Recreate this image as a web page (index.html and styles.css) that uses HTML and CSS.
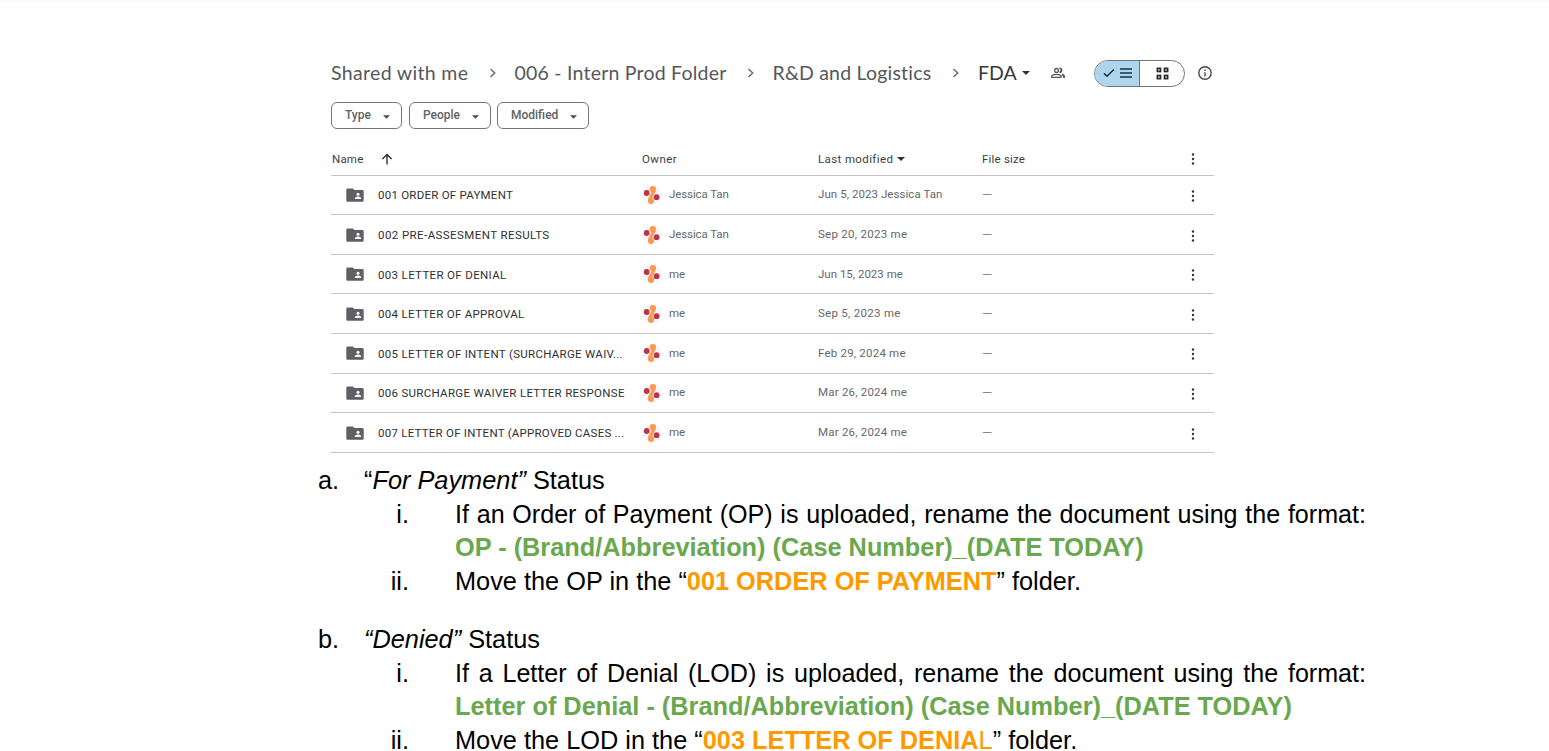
FILE: index.html
```html
<!DOCTYPE html>
<html lang="en">
<head>
<meta charset="utf-8">
<title>FDA folder guide</title>
<link rel="stylesheet" href="styles.css">
</head>
<body>
<svg class="defs" aria-hidden="true">
  <symbol id="folder" viewBox="0 0 18 14"><path d="M1.500.4h5.300l1.600 1.600h8q1.300 0 1.300 1.300v9.100q0 1.300-1.300 1.300h-15Q.3 13.700.3 12.400V1.700Q.3.400 1.500.400Z" fill="#5f6065"/><circle cx="12" cy="6.200" r="1.500" fill="#fff"/><path d="M8.900 11.100v-.7c0-1.300 1.900-1.900 3.100-1.900s3.100.6 3.100 1.900v.7z" fill="#fff"/></symbol>
  <symbol id="avatar" viewBox="0 0 20 20"><circle cx="10" cy="10" r="9.500" fill="#f5f4f8"/><circle cx="4.700" cy="8" r="2.900" fill="#bd3346"/><circle cx="14.600" cy="12.200" r="2.900" fill="#bd3346"/><circle cx="10.900" cy="4.200" r="3.100" fill="#f79b52"/><circle cx="9" cy="15.800" r="3.100" fill="#f79b52"/><path d="M12.300 5.500 7.500 14.500" stroke="#f79b52" stroke-width="3.200"/></symbol>
  <symbol id="dots" viewBox="0 0 4 14"><circle cx="2" cy="2.500" r="1.200"/><circle cx="2" cy="7" r="1.200"/><circle cx="2" cy="11.500" r="1.200"/></symbol>
  <symbol id="chev" viewBox="0 0 8 12"><path d="M1.500 2 5.700 6 1.500 10" fill="none" stroke="#6b6d70" stroke-width="1.500"/></symbol>
  <symbol id="caret" viewBox="0 0 8 4"><path d="M0 0h8L4 4z"/></symbol>
</svg>
<main class="page">
  <section class="drive">
    <nav class="crumbs">
      <span class="crumb c1">Shared with me</span><svg class="chev"><use href="#chev"/></svg>
      <span class="crumb c2">006 - Intern Prod Folder</span><svg class="chev"><use href="#chev"/></svg>
      <span class="crumb c3">R&amp;D and Logistics</span><svg class="chev"><use href="#chev"/></svg>
      <span class="crumb c4">FDA</span><svg class="caret"><use href="#caret"/></svg>
      <svg class="people" viewBox="0 0 16 12" fill="none" stroke="#55585c" stroke-width="1.300"><circle cx="6.500" cy="3.400" r="1.900"/><path d="M1.700 10.300v-.8c0-1.500 2.700-2.200 4.800-2.200s4.600.7 4.600 2.200v.8z"/><path d="M9.500 1.400c2.500-.4 2.700 3.600 0 4M12 7.300c1.700.5 2.200 1.300 2.200 3.600" stroke-width="1.900"/></svg>
      <div class="toggle">
        <div class="half on"><svg class="ic-check" viewBox="0 0 12 10"><path d="M1 5.400 4 8.300 10.800 1.500" fill="none" stroke="#14304a" stroke-width="1.500"/></svg><svg class="ic-list" viewBox="0 0 12 12"><path d="M0 2h12M0 6h12M0 10h12" stroke="#14304a" stroke-width="1.600"/></svg></div>
        <div class="half"><svg class="ic-grid" viewBox="0 0 13 13" fill="none" stroke="#27292c" stroke-width="1.700"><rect x="1.400" y="1.400" width="3.100" height="3.100"/><rect x="8.500" y="1.400" width="3.100" height="3.100"/><rect x="1.400" y="8.500" width="3.100" height="3.100"/><rect x="8.500" y="8.500" width="3.100" height="3.100"/></svg></div>
      </div>
      <svg class="info" viewBox="0 0 14 14"><circle cx="7" cy="7" r="6.200" fill="none" stroke="#45484b" stroke-width="1.400"/><path d="M7 6.200v4.200M7 3.600v1.500" stroke="#45484b" stroke-width="1.400"/></svg>
    </nav>
    <div class="chips">
      <div class="chip type"><span>Type</span><svg class="caret sm"><use href="#caret"/></svg></div>
      <div class="chip ppl"><span>People</span><svg class="caret sm"><use href="#caret"/></svg></div>
      <div class="chip mod"><span>Modified</span><svg class="caret sm"><use href="#caret"/></svg></div>
    </div>
    <div class="row head">
      <div class="cell name"><span class="h1">Name</span><svg class="up" viewBox="0 0 12 12"><path d="M6 11.500V1.500M1.400 6 6 1.400 10.600 6" fill="none" stroke="#303236" stroke-width="1.400"/></svg></div>
      <div class="cell"><span class="h2">Owner</span></div><div class="cell"><span class="h3">Last modified</span><svg class="caret"><use href="#caret"/></svg></div><div class="cell"><span class="h4">File size</span></div><svg class="dots"><use href="#dots"/></svg>
    </div>
    <div class="row"><div class="cell file"><svg class="folder"><use href="#folder"/></svg><span class="n1">001 ORDER OF PAYMENT</span></div><div class="cell owner"><svg class="avatar"><use href="#avatar"/></svg><span>Jessica Tan</span></div><div class="cell date"><span class="d1">Jun 5, 2023 Jessica Tan</span></div><div class="cell size">—</div><svg class="dots"><use href="#dots"/></svg></div>
    <div class="row"><div class="cell file"><svg class="folder"><use href="#folder"/></svg><span class="n2">002 PRE-ASSESMENT RESULTS</span></div><div class="cell owner"><svg class="avatar"><use href="#avatar"/></svg><span>Jessica Tan</span></div><div class="cell date"><span class="d2">Sep 20, 2023 me</span></div><div class="cell size">—</div><svg class="dots"><use href="#dots"/></svg></div>
    <div class="row"><div class="cell file"><svg class="folder"><use href="#folder"/></svg><span class="n3">003 LETTER OF DENIAL</span></div><div class="cell owner"><svg class="avatar"><use href="#avatar"/></svg><span>me</span></div><div class="cell date"><span class="d3">Jun 15, 2023 me</span></div><div class="cell size">—</div><svg class="dots"><use href="#dots"/></svg></div>
    <div class="row"><div class="cell file"><svg class="folder"><use href="#folder"/></svg><span class="n4">004 LETTER OF APPROVAL</span></div><div class="cell owner"><svg class="avatar"><use href="#avatar"/></svg><span>me</span></div><div class="cell date"><span class="d4">Sep 5, 2023 me</span></div><div class="cell size">—</div><svg class="dots"><use href="#dots"/></svg></div>
    <div class="row"><div class="cell file"><svg class="folder"><use href="#folder"/></svg><span class="n5">005 LETTER OF INTENT (SURCHARGE WAIV...</span></div><div class="cell owner"><svg class="avatar"><use href="#avatar"/></svg><span>me</span></div><div class="cell date"><span class="d5">Feb 29, 2024 me</span></div><div class="cell size">—</div><svg class="dots"><use href="#dots"/></svg></div>
    <div class="row"><div class="cell file"><svg class="folder"><use href="#folder"/></svg><span class="n6">006 SURCHARGE WAIVER LETTER RESPONSE</span></div><div class="cell owner"><svg class="avatar"><use href="#avatar"/></svg><span>me</span></div><div class="cell date"><span class="d6">Mar 26, 2024 me</span></div><div class="cell size">—</div><svg class="dots"><use href="#dots"/></svg></div>
    <div class="row"><div class="cell file"><svg class="folder"><use href="#folder"/></svg><span class="n7">007 LETTER OF INTENT (APPROVED CASES ...</span></div><div class="cell owner"><svg class="avatar"><use href="#avatar"/></svg><span>me</span></div><div class="cell date"><span class="d6">Mar 26, 2024 me</span></div><div class="cell size">—</div><svg class="dots"><use href="#dots"/></svg></div>
  </section>
  <section class="guide">
    <div class="topic"><span class="mark">a.</span><p>“<i>For Payment”</i> Status</p></div>
    <div class="step"><span class="mark">i.</span><p class="wide">If an Order of Payment (OP) is uploaded, rename the document using the format:</p></div>
    <div class="step"><span class="mark"></span><p><b class="green">OP - (Brand/Abbreviation) (Case Number)_(DATE TODAY)</b></p></div>
    <div class="step"><span class="mark">ii.</span><p>Move the OP in the “<b class="orange">001 ORDER OF PAYMENT</b>” folder.</p></div>
    <div class="topic second"><span class="mark">b.</span><p><i>“Denied”</i> Status</p></div>
    <div class="step"><span class="mark">i.</span><p class="wide">If a Letter of Denial (LOD) is uploaded, rename the document using the format:</p></div>
    <div class="step"><span class="mark"></span><p><b class="green">Letter of Denial - (Brand/Abbreviation) (Case Number)_(DATE TODAY)</b></p></div>
    <div class="step"><span class="mark">ii.</span><p>Move the LOD in the “<b class="orange">003 LETTER OF DENIA</b><span class="orange">L</span>” folder.</p></div>
  </section>
</main>
</body>
</html>
```

FILE: styles.css
```css
body { margin: 0; background: #fff; color: #000; overflow: hidden; }
.defs { position: absolute; width: 0; height: 0; }
.page { height: 751px; overflow: hidden; border-top: 2px solid #fafafa; box-sizing: border-box; }
.drive { width: 883px; margin-left: 331px; padding-top: 55px; font-family: Roboto, sans-serif; }
svg { flex: none; }
.crumbs { display: flex; align-items: center; height: 32px; }
.crumb { font: 19.5px Lato, sans-serif; color: #55575a; white-space: nowrap; padding-bottom: 2px; }
.c1 { width: 157.5px; letter-spacing: .33px; }
.c2 { width: 232px; letter-spacing: .22px; }
.c3 { width: 179.5px; letter-spacing: .2px; }
.c4 { width: 44px; color: #36383b; }
.chev { width: 8px; height: 12px; margin-right: 18px; }
.caret { width: 8px; height: 4px; fill: #2c2e30; }
.people { width: 16px; height: 12px; margin-left: 20px; }
.toggle { display: flex; width: 91px; height: 27px; margin-left: 28px; border: 1px solid #6f7478; border-radius: 14px; overflow: hidden; box-sizing: border-box; }
.half { display: flex; flex: 1; align-items: center; justify-content: center; }
.on { background: #add6ec; border-right: 1px solid #6f7478; gap: 5px; }
.ic-check { width: 12px; height: 10px; }
.ic-list { width: 12px; height: 12px; }
.ic-grid { width: 13px; height: 13px; }
.info { width: 14px; height: 14px; margin-left: 13px; }
.chips { display: flex; gap: 7px; margin-top: 13px; }
.chip { display: flex; align-items: center; justify-content: space-between; height: 27px; padding: 0 11px 0 13px; border: 1px solid #74777a; border-radius: 6px; box-sizing: border-box; font-size: 12px; font-weight: 500; color: #606265; }
.chip span { padding-bottom: 1px; }
.type { width: 71px; }
.ppl { width: 82px; }
.mod { width: 92px; margin-left: -1px; }
.sm { width: 7px; margin-top: 3px; fill: #4a4c4f; }
.row { display: grid; grid-template-columns: 311px 176px 164px 208.5px 4px; height: 39.6px; align-items: center; box-sizing: border-box; border-bottom: 1px solid #c4c5c4; font-size: 11.5px; color: #65676b; }
.head { height: 32.7px; margin-top: 14px; color: #3c3e42; }
.cell { display: flex; align-items: center; white-space: nowrap; }
.h1 { padding-left: 1px; letter-spacing: .2px; }
.h2 { letter-spacing: .45px; }
.h3 { letter-spacing: .38px; padding-right: 4px; }
.h4 { letter-spacing: .2px; }
.up { width: 12px; height: 12px; margin-left: 18px; }
.dots { width: 4px; height: 14px; margin-top: 2px; fill: #333; }
.head .dots { margin-top: 0; }
.file { padding-left: 15px; gap: 14px; color: #2f3033; }
.file span { padding-top: 1px; }
.n1, .n7 { letter-spacing: .24px; }
.n2 { letter-spacing: .42px; }
.n3 { letter-spacing: .34px; }
.n4, .n5, .n6 { letter-spacing: .3px; }
.d1 { letter-spacing: .06px; }
.d2, .d4 { letter-spacing: .28px; }
.d5, .d6 { letter-spacing: .21px; }
.owner span, .date { padding-bottom: 1px; }
.owner span { letter-spacing: -.1px; }
.size { font-size: 13px; color: #85878a; }
.folder { width: 18px; height: 14px; }
.avatar { width: 20px; height: 20px; margin-right: 7px; }
.guide { font: 25.33px/33.7px "Liberation Sans", Arial, sans-serif; padding: 11px 0 0 318px; }
.topic, .step { display: flex; height: 33.7px; white-space: nowrap; }
.guide p { margin: 0; }
.topic .mark { width: 46px; }
.step .mark { width: 91px; text-align: right; margin-right: 46px; }
.second { margin-top: 24.5px; }
.wide { width: 911px; text-align-last: justify; font-size: 25.1px; }
.green { color: #6aa84f; }
.orange { color: #ff9900; }
```
